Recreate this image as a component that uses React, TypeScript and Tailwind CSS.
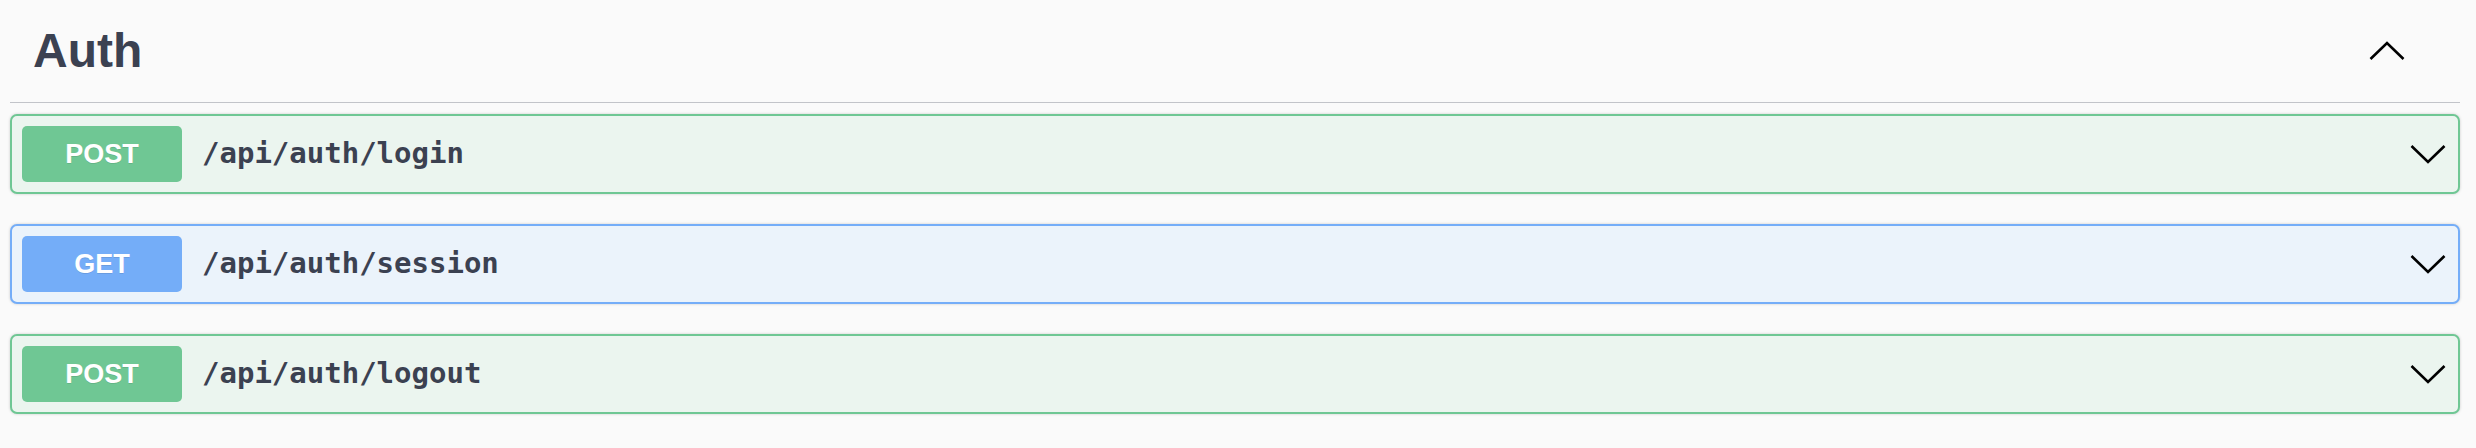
import React from "react";

type Op = { method: "POST" | "GET"; path: string };

const ops: Op[] = [
  { method: "POST", path: "/api/auth/login" },
  { method: "GET", path: "/api/auth/session" },
  { method: "POST", path: "/api/auth/logout" },
];

function ChevronDown() {
  return (
    <svg width="36" height="20" viewBox="0 0 36 20" className="shrink-0">
      <polyline points="1.5,2 18,18 34.5,2" fill="none" stroke="#000" strokeWidth="2.6" />
    </svg>
  );
}

function ChevronUp() {
  return (
    <svg width="36" height="20" viewBox="0 0 36 20" className="shrink-0">
      <polyline points="1.5,18 18,2 34.5,18" fill="none" stroke="#000" strokeWidth="2.6" />
    </svg>
  );
}

function OpBlock({ op }: { op: Op }) {
  const post = op.method === "POST";
  return (
    <div
      className={
        post
          ? "flex h-[80px] items-center rounded-[7px] border-2 border-[#6fc794] bg-[#ebf5ef] pl-[10px] pr-[12px] shadow-[0_0_3px_rgba(0,0,0,0.19)]"
          : "flex h-[80px] items-center rounded-[7px] border-2 border-[#74adf8] bg-[#ebf3fb] pl-[10px] pr-[12px] shadow-[0_0_3px_rgba(0,0,0,0.19)]"
      }
    >
      <div
        className={
          post
            ? "flex h-[56px] w-[160px] shrink-0 items-center justify-center rounded-[5px] bg-[#6fc794] font-['Liberation_Sans',Arial,sans-serif] text-[27px] font-bold text-white [text-shadow:0_1px_0_rgba(0,0,0,0.1)]"
            : "flex h-[56px] w-[160px] shrink-0 items-center justify-center rounded-[5px] bg-[#74adf8] font-['Liberation_Sans',Arial,sans-serif] text-[27px] font-bold text-white [text-shadow:0_1px_0_rgba(0,0,0,0.1)]"
        }
      >
        {op.method}
      </div>
      <div className="ml-[20px] flex-1 font-['DejaVu_Sans_Mono',monospace] text-[29px] font-semibold text-[#3b4151]">
        {op.path}
      </div>
      <ChevronDown />
    </div>
  );
}

export default function App() {
  return (
    <div className="h-[448px] w-full bg-[#fafafa] pl-[10px] pr-[16px]">
      <div className="flex h-[103px] items-center justify-between border-b border-[#c2c4c9] pl-[23px] pr-[55px]">
        <h3 className="font-['Liberation_Sans',Arial,sans-serif] text-[48px] font-bold text-[#3b4151]">Auth</h3>
        <ChevronUp />
      </div>
      <div className="mt-[11px] flex flex-col gap-[30px]">
        {ops.map((op) => (
          <OpBlock key={op.path} op={op} />
        ))}
      </div>
    </div>
  );
}
